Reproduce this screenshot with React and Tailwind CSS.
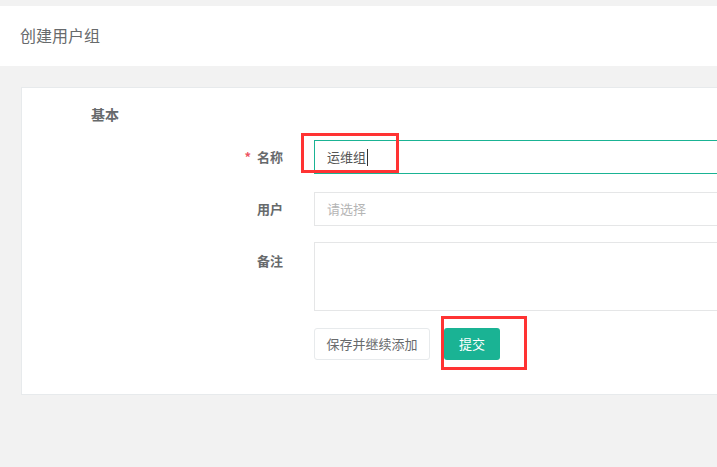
import React from "react";

const font = { fontFamily: '"Noto Sans CJK SC", "Noto Sans", sans-serif' };

export default function App() {
  return (
    <div className="w-[717px] h-[467px] overflow-hidden bg-[#f2f2f2] relative" style={font}>
      <div className="h-[6px]" />
      <div className="h-[60px] bg-white flex items-center pl-[20px] pb-[3px]">
        <span className="text-[16px] text-[#676a6c] leading-none">创建用户组</span>
      </div>
      <div className="ml-[21px] mt-[21px] w-[720px] h-[308px] bg-white border border-[#e7eaec] border-r-0 relative">
        <div className="pl-[69px] pt-[16px] text-[14px] font-bold text-[#676a6c] leading-[20px]">基本</div>
        <div className="mt-[16px] flex flex-col">
          <div className="flex items-center h-[34px]">
            <div className="w-[261px] text-right text-[13px] font-bold text-[#676a6c] flex justify-end items-center gap-[6px]">
              <span className="text-[#ed5565] text-[13px]">*</span>
              <span>名称</span>
            </div>
            <div className="ml-[31px] flex-1 h-[34px] border border-[#1ab394] flex items-center pl-[12px] text-[13px] text-[#555]">
              运维组<span className="inline-block w-px h-[17px] bg-[#333] ml-[1px]" />
            </div>
          </div>
          <div className="flex items-center h-[34px] mt-[18px]">
            <div className="w-[261px] text-right text-[13px] font-bold text-[#676a6c]">用户</div>
            <div className="ml-[31px] flex-1 h-[34px] border border-[#e5e6e7] flex items-center pl-[12px] text-[13px] text-[#b5b5b5]">
              请选择
            </div>
          </div>
          <div className="flex items-start mt-[16px]">
            <div className="w-[261px] text-right text-[13px] font-bold text-[#676a6c] pt-[9px]">备注</div>
            <div className="ml-[31px] flex-1 h-[69px] border border-[#e5e6e7]" />
          </div>
          <div className="flex mt-[17px] ml-[292px] gap-[14px]">
            <button className="w-[116px] h-[32px] border border-[#e7eaec] rounded-[3px] bg-white text-[13px] text-[#676a6c]">
              保存并继续添加
            </button>
            <button className="w-[56px] h-[32px] rounded-[3px] bg-[#1ab394] text-[13px] text-white">提交</button>
          </div>
        </div>
      </div>
      <div className="absolute left-[301px] top-[133px] w-[98px] h-[40px] border-[3px] border-[#f33]" />
      <div className="absolute left-[441px] top-[316px] w-[86px] h-[54px] border-[3px] border-[#f33]" />
    </div>
  );
}
